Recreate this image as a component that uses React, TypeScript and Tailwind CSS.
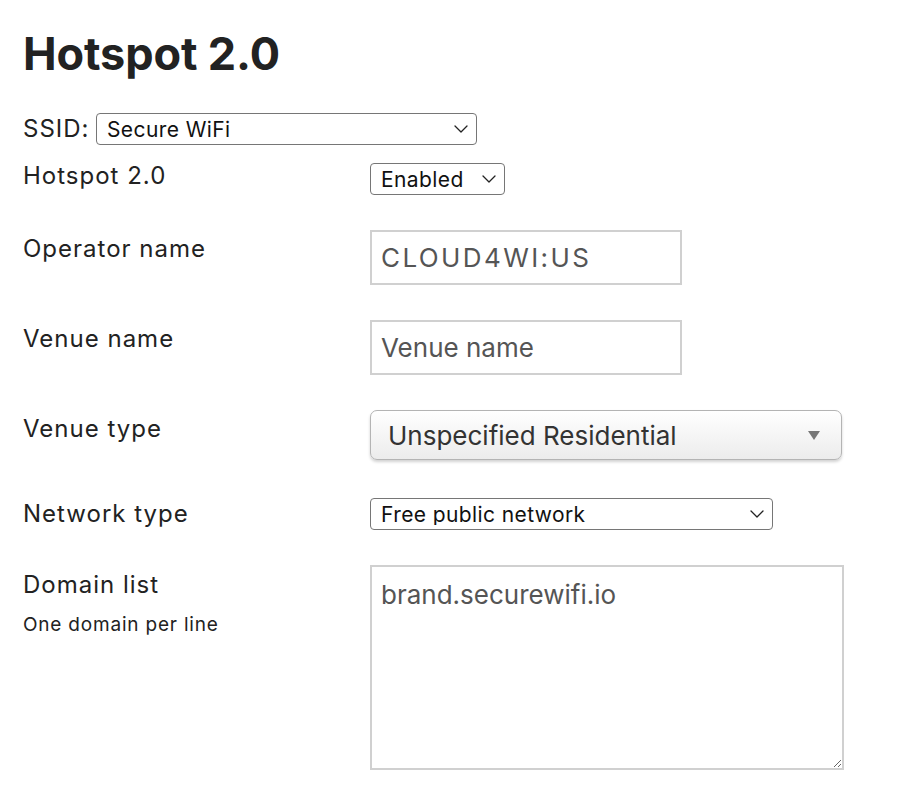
import React, { useState } from 'react'

const Chevron: React.FC<{ className?: string }> = ({ className }) => (
  <svg className={className} width="14" height="8" viewBox="0 0 14 8" fill="none">
    <path d="M1 1l6 6 6-6" stroke="#222" strokeWidth="1.3" strokeLinecap="round" strokeLinejoin="round" />
  </svg>
)

const NativeSelect: React.FC<{
  value: string
  options: string[]
  onChange: (v: string) => void
  className: string
}> = ({ value, options, onChange, className }) => (
  <div className={`relative ${className}`}>
    <select
      value={value}
      onChange={(e) => onChange(e.target.value)}
      className="w-full h-full appearance-none bg-white border border-[#767676] rounded-[4px] pl-[10px] pr-8 text-[21px] tracking-[0.4px] leading-none text-[#111] outline-none"
    >
      {options.map((o) => (
        <option key={o}>{o}</option>
      ))}
    </select>
    <Chevron className="absolute right-[9px] top-1/2 -translate-y-1/2 pointer-events-none" />
  </div>
)

const App: React.FC = () => {
  const [ssid, setSsid] = useState('Secure WiFi')
  const [enabled, setEnabled] = useState('Enabled')
  const [operator, setOperator] = useState('CLOUD4WI:US')
  const [venue, setVenue] = useState('')
  const [venueType, setVenueType] = useState('Unspecified Residential')
  const [network, setNetwork] = useState('Free public network')
  const [domains, setDomains] = useState('brand.securewifi.io')

  const label = 'w-[347px] shrink-0 text-[24px] tracking-[1px] leading-[30px] text-[#222]'
  const field =
    'h-[55px] w-[312px] border-2 border-[#d0d0d0] px-[9px] text-[26px] text-[#555] placeholder:text-[#555] outline-none'

  return (
    <div className="min-h-screen bg-white pl-[23px] pt-[26px] font-['Inter',sans-serif] text-[#222]">
      <h1 className="text-[45px] font-bold leading-[56px] tracking-[-0.1px]">Hotspot 2.0</h1>

      <div className="mt-[31px] flex items-center">
        <span className="w-[73px] text-[24px] tracking-[1px] leading-[30px]">SSID:</span>
        <NativeSelect value={ssid} onChange={setSsid} options={['Secure WiFi', 'Guest WiFi']} className="w-[381px] h-[32px]" />
      </div>

      <div className="mt-[18px] flex items-start">
        <div className={`${label} -mt-[2px]`}>Hotspot 2.0</div>
        <NativeSelect value={enabled} onChange={setEnabled} options={['Enabled', 'Disabled']} className="w-[135px] h-[32px]" />
      </div>

      <div className="mt-[35px] flex items-start">
        <div className={`${label} pt-[4px]`}>Operator name</div>
        <input className={`${field} tracking-[2.4px]`} value={operator} onChange={(e) => setOperator(e.target.value)} />
      </div>

      <div className="mt-[35px] flex items-start">
        <div className={`${label} pt-[4px]`}>Venue name</div>
        <input className={field} placeholder="Venue name" value={venue} onChange={(e) => setVenue(e.target.value)} />
      </div>

      <div className="mt-[35px] flex items-start">
        <div className={`${label} pt-[4px]`}>Venue type</div>
        <div className="relative w-[472px] h-[50px]">
          <select
            value={venueType}
            onChange={(e) => setVenueType(e.target.value)}
            className="w-full h-full appearance-none rounded-[7px] border border-[#b4b4b4] bg-gradient-to-b from-white to-[#ececec] pl-[17px] pr-10 text-[26px] text-[#333] shadow-[0_2px_3px_rgba(0,0,0,0.18)] outline-none"
          >
            <option>Unspecified Residential</option>
            <option>Private Residence</option>
            <option>Boarding House</option>
          </select>
          <svg className="absolute right-[22px] top-[21px] pointer-events-none" width="12" height="9" viewBox="0 0 12 9">
            <path d="M0 0h12L6 9z" fill="#777" />
          </svg>
        </div>
      </div>

      <div className="mt-[38px] flex items-start">
        <div className={`${label} pt-[1px]`}>Network type</div>
        <NativeSelect
          value={network}
          onChange={setNetwork}
          options={['Free public network', 'Private network', 'Chargeable public network']}
          className="w-[403px] h-[32px]"
        />
      </div>

      <div className="mt-[35px] flex items-start">
        <div className="w-[347px] shrink-0 pt-[5px]">
          <div className="text-[24px] tracking-[1px] leading-[30px]">Domain list</div>
          <div className="mt-[13px] text-[19px] tracking-[0.8px] leading-[24px]">One domain per line</div>
        </div>
        <textarea
          className="h-[205px] w-[474px] border-2 border-[#d0d0d0] px-[9px] pt-[12px] pb-[9px] text-[26px] leading-[32px] text-[#555] outline-none"
          value={domains}
          onChange={(e) => setDomains(e.target.value)}
        />
      </div>
    </div>
  )
}

export default App
